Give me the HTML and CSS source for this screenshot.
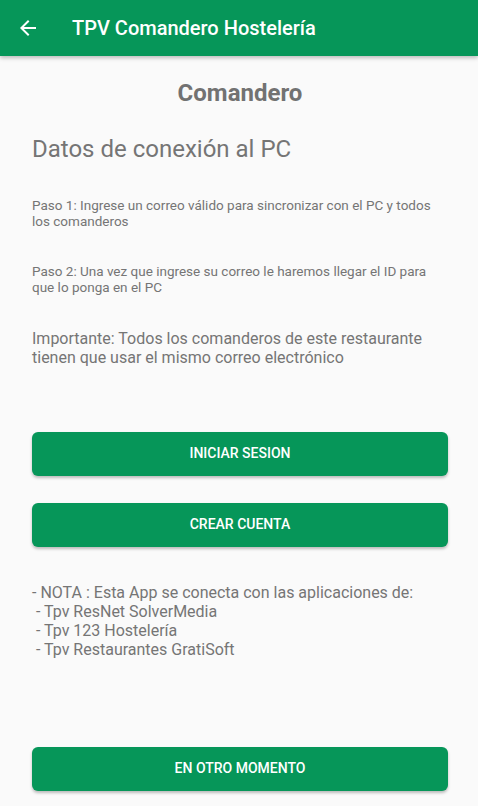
FILE: index.html
```html
<html>
<head>
    <link rel="stylesheet" href="styles.css">
</head>
<body>
    <div class="app-bar">
        <svg class="back-icon" width="24" height="24" viewBox="0 0 24 24">
            <path d="M20 11H7.83l5.59-5.59L12 4l-8 8 8 8 1.41-1.41L7.83 13H20v-2z" fill="#ffffff"/>
        </svg>
        <div class="app-title">TPV Comandero Hostelería</div>
    </div>
    <div class="content">
        <h1 class="title">Comandero</h1>
        <h2 class="subtitle">Datos de conexión al PC</h2>
        <p class="step">Paso 1: Ingrese un correo válido para sincronizar con el PC y todos los comanderos</p>
        <p class="step">Paso 2: Una vez que ingrese su correo le haremos llegar el ID para que lo ponga en el PC</p>
        <p class="note">Importante: Todos los comanderos de este restaurante tienen que usar el mismo correo electrónico</p>
        <button class="btn btn-first">INICIAR SESION</button>
        <button class="btn">CREAR CUENTA</button>
        <p class="note apps">- NOTA : Esta App se conecta con las aplicaciones de:<br>&nbsp;- Tpv ResNet SolverMedia<br>&nbsp;- Tpv 123 Hostelería<br>&nbsp;- Tpv Restaurantes GratiSoft</p>
        <button class="btn btn-last">EN OTRO MOMENTO</button>
    </div>
</body>
</html>
```

FILE: styles.css
```css
body {
    margin: 0;
    background-color: #fafafa;
    font-family: Roboto, "Liberation Sans", sans-serif;
    color: #757575;
}
.app-bar {
    height: 56px;
    background-color: #069659;
    display: flex;
    align-items: center;
    padding-left: 16px;
    box-shadow: 0 2px 4px rgba(0, 0, 0, 0.25);
    position: relative;
}
.back-icon {
    margin-right: 32px;
}
.app-title {
    color: #ffffff;
    font-size: 20px;
    font-weight: 500;
}
.content {
    padding: 23px 30px 0 32px;
    display: flex;
    flex-direction: column;
}
.title {
    margin: 0;
    font-size: 24px;
    line-height: 28px;
    font-weight: bold;
    text-align: center;
    color: #727272;
}
.subtitle {
    margin: 28px 0 0;
    font-size: 24px;
    line-height: 28px;
    font-weight: normal;
}
.step {
    margin: 34px 0 0;
    font-size: 13.5px;
    line-height: 16px;
}
.note {
    margin: 34px 0 0;
    font-size: 16px;
    line-height: 19px;
}
.apps {
    margin-top: 36px;
}
.btn {
    height: 44px;
    margin-top: 27px;
    border: none;
    border-radius: 6px;
    background-color: #069659;
    color: #ffffff;
    font-family: Roboto, "Liberation Sans", sans-serif;
    font-size: 14px;
    font-weight: 500;
    padding: 0 0 3px;
    box-shadow: 0 2px 3px rgba(0, 0, 0, 0.25);
}
.btn-first {
    margin-top: 65px;
}
.btn-last {
    margin-top: 88px;
}
```
